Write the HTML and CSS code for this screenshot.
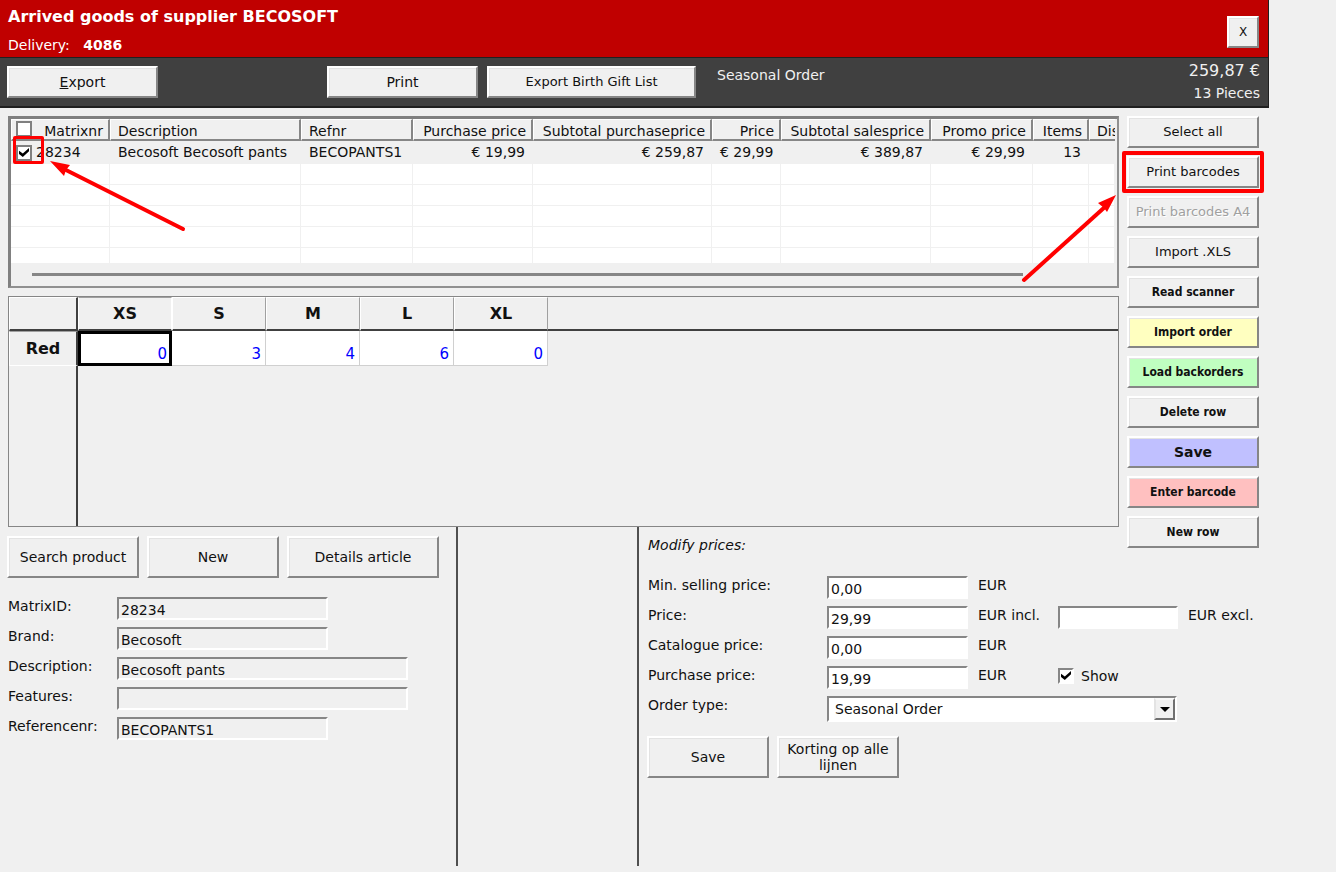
FILE: index.html
```
<!DOCTYPE html>
<html lang="en">
<head>
    <meta charset="utf-8">
    <title>Arrived goods of supplier BECOSOFT</title>
    <meta name="viewport" content="width=device-width, initial-scale=1">
    <link rel="stylesheet" href="styles.css">
</head>
<body>

<div id="window">
    <header class="titlebar">
        <div>
            <h1>Arrived goods of supplier BECOSOFT</h1>
            <p class="delivery">Delivery: <b>4086</b></p>
        </div>
        <button type="button" class="button close">X</button>
    </header>

    <div class="toolbar">
        <button type="button" class="button export"><u>E</u>xport</button>
        <button type="button" class="button">Print</button>
        <button type="button" class="button small gift">Export Birth Gift List</button>
        <span class="order">Seasonal Order</span>
        <div class="totals">
            <div class="amount">259,87 €</div>
            <div>13 Pieces</div>
        </div>
    </div>

    <main class="content">
        <div class="lists">
            <div class="goods">
                <table>
                    <colgroup>
                        <col class="w-nr"><col class="w-desc"><col class="w-ref"><col class="w-purch"><col class="w-subp">
                        <col class="w-price"><col class="w-subs"><col class="w-promo"><col class="w-items"><col>
                    </colgroup>
                    <thead>
                        <tr>
                            <th class="num"><input type="checkbox" class="check flat" aria-label="All rows">Matrixnr</th>
                            <th>Description</th>
                            <th>Refnr</th>
                            <th class="num">Purchase price</th>
                            <th class="num">Subtotal purchaseprice</th>
                            <th class="num">Price</th>
                            <th class="num">Subtotal salesprice</th>
                            <th class="num">Promo price</th>
                            <th class="num">Items</th>
                            <th>Dis</th>
                        </tr>
                    </thead>
                    <tbody>
                        <tr class="selected">
                            <td class="first"><input type="checkbox" class="check flat" aria-label="Row 28234" checked>28234</td>
                            <td>Becosoft Becosoft pants</td>
                            <td>BECOPANTS1</td>
                            <td class="num">€ 19,99</td>
                            <td class="num">€ 259,87</td>
                            <td class="num">€ 29,99</td>
                            <td class="num">€ 389,87</td>
                            <td class="num">€ 29,99</td>
                            <td class="num">13</td>
                            <td></td>
                        </tr>
                        <tr><td></td><td></td><td></td><td></td><td></td><td></td><td></td><td></td><td></td><td></td></tr>
                        <tr><td></td><td></td><td></td><td></td><td></td><td></td><td></td><td></td><td></td><td></td></tr>
                        <tr><td></td><td></td><td></td><td></td><td></td><td></td><td></td><td></td><td></td><td></td></tr>
                        <tr><td></td><td></td><td></td><td></td><td></td><td></td><td></td><td></td><td></td><td></td></tr>
                        <tr class="last"><td></td><td></td><td></td><td></td><td></td><td></td><td></td><td></td><td></td><td></td></tr>
                    </tbody>
                </table>
                <div class="scroll"><div class="thumb"></div></div>
            </div>

            <div class="sizes">
                <table>
                    <thead>
                        <tr>
                            <th class="corner"></th>
                            <th class="pressed">XS</th>
                            <th>S</th>
                            <th>M</th>
                            <th>L</th>
                            <th>XL</th>
                            <th class="rest"></th>
                        </tr>
                    </thead>
                    <tbody>
                        <tr>
                            <th class="corner pressed">Red</th>
                            <td class="current">0</td>
                            <td>3</td>
                            <td>4</td>
                            <td>6</td>
                            <td>0</td>
                            <td class="rest"></td>
                        </tr>
                        <tr class="blank">
                            <td class="corner"></td>
                            <td colspan="6" class="rest"></td>
                        </tr>
                    </tbody>
                </table>
            </div>
        </div>

        <nav class="side">
            <button type="button" class="button small">Select all</button>
            <div class="marked"><button type="button" class="button small">Print barcodes</button></div>
            <button type="button" class="button small" disabled>Print barcodes A4</button>
            <button type="button" class="button small">Import .XLS</button>
            <button type="button" class="button strong">Read scanner</button>
            <button type="button" class="button strong yellow">Import order</button>
            <button type="button" class="button strong green">Load backorders</button>
            <button type="button" class="button strong">Delete row</button>
            <button type="button" class="button save">Save</button>
            <button type="button" class="button strong pink">Enter barcode</button>
            <button type="button" class="button strong">New row</button>
        </nav>

        <section class="bottom">
            <form class="product">
                <div class="buttons">
                    <button type="button" class="button">Search product</button>
                    <button type="button" class="button">New</button>
                    <button type="button" class="button wide">Details article</button>
                </div>
                <div class="row">
                    <label for="matrixid">MatrixID:</label>
                    <input type="text" id="matrixid" class="text" value="28234" readonly>
                </div>
                <div class="row">
                    <label for="brand">Brand:</label>
                    <input type="text" id="brand" class="text" value="Becosoft" readonly>
                </div>
                <div class="row">
                    <label for="description">Description:</label>
                    <input type="text" id="description" class="text long" value="Becosoft pants" readonly>
                </div>
                <div class="row">
                    <label for="features">Features:</label>
                    <input type="text" id="features" class="text long" value="" readonly>
                </div>
                <div class="row">
                    <label for="refnr">Referencenr:</label>
                    <input type="text" id="refnr" class="text" value="BECOPANTS1" readonly>
                </div>
            </form>

            <div class="spacer"></div>

            <form class="prices">
                <p class="legend">Modify prices:</p>
                <div class="row">
                    <label for="minprice">Min. selling price:</label>
                    <input type="text" id="minprice" class="text" value="0,00">
                    <span class="unit">EUR</span>
                </div>
                <div class="row">
                    <label for="price">Price:</label>
                    <input type="text" id="price" class="text" value="29,99">
                    <span class="unit">EUR incl.</span>
                    <input type="text" id="excl" class="text excl" value="">
                    <label for="excl" class="after">EUR excl.</label>
                </div>
                <div class="row">
                    <label for="catalogue">Catalogue price:</label>
                    <input type="text" id="catalogue" class="text" value="0,00">
                    <span class="unit">EUR</span>
                </div>
                <div class="row">
                    <label for="purchase">Purchase price:</label>
                    <input type="text" id="purchase" class="text" value="19,99">
                    <span class="unit">EUR</span>
                    <label class="show"><input type="checkbox" class="check sunken" checked>Show</label>
                </div>
                <div class="row">
                    <label for="ordertype">Order type:</label>
                    <div class="combo">
                        <select id="ordertype">
                            <option>Seasonal Order</option>
                        </select>
                        <span class="drop"></span>
                    </div>
                </div>
                <div class="buttons">
                    <button type="button" class="button">Save</button>
                    <button type="button" class="button">Korting op alle lijnen</button>
                </div>
            </form>
        </section>

        <!-- red markers -->
        <div class="box-left"></div>
        <svg class="arrow-left" width="140" height="76" viewBox="0 0 140 76">
            <path d="M16 10L135 70" stroke="#f00" stroke-width="4" stroke-linecap="round"/>
            <path d="M2 2L22 6L18 11L16 17Z" fill="#f00"/>
        </svg>
        <svg class="arrow-right" width="100" height="92" viewBox="0 0 100 92">
            <path d="M4 86L86 12" stroke="#f00" stroke-width="4" stroke-linecap="round"/>
            <path d="M96 1L87 18L84 14L78 9Z" fill="#f00"/>
        </svg>
    </main>
</div>

</body>
</html>
```
FILE: styles.css
```
* {
    box-sizing: border-box;
    margin: 0;
    padding: 0;
}

body {
    background: #f0f0f0;
    font-family: "DejaVu Sans", Verdana, sans-serif;
    font-size: 14px;
    line-height: 18px;
    color: #111;
}

input, select, button {
    font: inherit;
    color: inherit;
}

#window {
    margin-right: 67px;
}

/* header */
.titlebar {
    display: flex;
    justify-content: space-between;
    align-items: flex-start;
    height: 58px;
    padding: 8px 9px 0 8px;
    background: #c00000;
    border-right: 1px solid #202020;
    border-bottom: 1px solid #202020;
    color: #fff;
}

.titlebar h1 {
    font-size: 16px;
    line-height: 18px;
}

.delivery {
    margin-top: 10px;
}

.delivery b {
    margin-left: 9px;
}

.toolbar {
    display: flex;
    align-items: flex-start;
    height: 50px;
    padding: 8px 8px 0 7px;
    background: #404040;
    border-right: 1px solid #202020;
    border-bottom: 2px solid #202020;
    color: #f0f0f0;
}

.toolbar .button {
    width: 151px;
    margin-right: 9px;
}

.toolbar .export {
    margin-right: 169px;
}

.toolbar .gift {
    width: 209px;
    margin-right: 21px;
}

.totals {
    margin-left: auto;
    margin-top: -6px;
    text-align: right;
    line-height: 22px;
}

.amount {
    font-size: 16px;
}

/* buttons */
.button {
    height: 32px;
    background: #f0f0f0;
    border: 2px solid;
    border-color: #fff #868686 #868686 #fff;
    box-shadow: inset 1px 1px #e3e3e3;
    line-height: 16px;
    color: #111;
}

.close {
    width: 32px;
    margin-top: 8px;
    font-size: 12px;
}

.small {
    font-size: 13px;
}

.strong {
    font-size: 12px;
    font-weight: bold;
    font-family: "DejaVu Sans Condensed", "DejaVu Sans", sans-serif;
}

.save {
    font-weight: bold;
    background: #c0c0ff;
}

.yellow {
    background: #ffffc0;
}

.green {
    background: #c0ffc0;
}

.pink {
    background: #ffc0c0;
}

.button:disabled {
    color: #a0a0a0;
    text-shadow: 1px 1px #fff;
}

/* page grid */
.content {
    position: relative;
    display: grid;
    grid-template-columns: minmax(0, 1fr) 132px;
    column-gap: 8px;
    padding: 8px 10px 0 8px;
}

.side {
    display: flex;
    flex-direction: column;
    gap: 8px;
    margin-bottom: -24px;
}

.side .button {
    width: 100%;
}

.marked {
    position: relative;
    height: 32px;
}

.marked::after {
    content: "";
    position: absolute;
    inset: -5px;
    border: 4px solid #f00;
    border-radius: 2px;
}

/* goods list */
.goods {
    height: 172px;
    border: 1px solid #808080;
    border-width: 3px 2px 2px 3px;
    border-color: #808080 #909090 #909090 #808080;
    padding-right: 2px;
    overflow: hidden;
}

.goods table {
    width: 100%;
    table-layout: fixed;
    border-collapse: separate;
    border-spacing: 0;
    background: #fff;
}

.w-nr {
    width: 99px;
}

.w-desc {
    width: 191px;
}

.w-ref {
    width: 112px;
}

.w-purch {
    width: 120px;
}

.w-subp {
    width: 179px;
}

.w-price {
    width: 69px;
}

.w-subs {
    width: 150px;
}

.w-promo {
    width: 102px;
}

.w-items {
    width: 56px;
}

.goods th {
    height: 22px;
    padding: 3px 5px 0 7px;
    background: #f0f0f0;
    border-top: 1px solid #fff;
    border-left: 1px solid #fff;
    border-right: 2px solid #868686;
    border-bottom: 2px solid #868686;
    font-weight: normal;
    line-height: 16px;
    text-align: left;
    white-space: nowrap;
    overflow: hidden;
}

.goods th:last-child {
    border-right: 0;
    padding-right: 0;
}

.goods td {
    height: 21px;
    padding: 0 7px 0 8px;
    border-right: 1px solid #f0f0f0;
    border-bottom: 1px solid #f0f0f0;
    white-space: nowrap;
}

.goods .selected td {
    height: 23px;
    background: #f0f0f0;
}

.goods .last td {
    height: 16px;
}

.goods .num {
    text-align: right;
}

.goods td.first {
    padding-left: 5px;
}

.goods th .check {
    float: left;
    margin: -2px 0 0 -3px;
}

.goods td .check {
    margin-right: 4px;
}

.scroll {
    height: 24px;
    padding: 9px 92px 0 21px;
}

.thumb {
    height: 3px;
    background: #868686;
}

/* tick boxes */
.check {
    appearance: none;
    width: 16px;
    height: 16px;
    background: #fff;
    border: 2px solid #808080;
    vertical-align: middle;
}

.check:checked::after {
    content: "";
    display: block;
    width: 10px;
    height: 9px;
    margin: 1px;
    background: #000;
    clip-path: polygon(0 30%, 38% 62%, 100% 0, 100% 35%, 38% 100%, 0 68%);
}

.sunken {
    border-color: #868686 #fff #fff #868686;
}

/* size matrix */
.sizes {
    height: 231px;
    margin-top: 8px;
    border: 1px solid #868686;
}

.sizes table {
    width: 100%;
    height: 100%;
    table-layout: fixed;
    border-collapse: separate;
    border-spacing: 0;
}

.sizes th, .sizes td {
    width: 94px;
}

.sizes th {
    height: 34px;
    border-left: 1px solid #fff;
    border-top: 1px solid #fff;
    border-right: 1px solid #a0a0a0;
    border-bottom: 2px solid #404040;
    font-size: 16px;
}

.sizes td {
    height: 35px;
    padding: 12px 4px 0 0;
    background: #fff;
    border-right: 1px solid #d0d0d0;
    border-bottom: 1px solid #d0d0d0;
    font-size: 15px;
    text-align: right;
    color: #00f;
}

.sizes .corner {
    width: 69px;
    border-right: 2px solid #404040;
}

.sizes thead .pressed {
    border-top-color: #a0a0a0;
    border-right-color: #fff;
}

.sizes tbody th {
    height: 35px;
    border-top-color: #a0a0a0;
    border-bottom: 1px solid #fff;
}

.sizes td.current {
    border: 3px solid #000;
    padding: 11px 2px 0 0;
    line-height: 17px;
}

.sizes .rest {
    width: auto;
    background: none;
    border-right: 0;
    border-left: 0;
    border-top: 0;
}

.sizes tbody .rest {
    border-bottom: 0;
}

.sizes .blank td {
    height: auto;
    background: none;
    border-bottom: 0;
}

/* forms */
.bottom {
    grid-column: 1 / 3;
    display: grid;
    grid-template-columns: 448px 183px minmax(0, 1fr);
    min-height: 339px;
}

.spacer {
    border-left: 2px solid #505050;
    border-right: 2px solid #505050;
}

.product {
    padding-top: 9px;
}

.product .buttons {
    display: flex;
    gap: 8px;
    margin: 0 0 19px -1px;
}

.product .button {
    width: 132px;
    height: 42px;
}

.product .wide {
    width: 152px;
}

.row {
    display: flex;
    align-items: flex-start;
    height: 30px;
}

.row label:first-child {
    width: 109px;
}

.text {
    width: 211px;
    height: 23px;
    padding: 2px 0 0 2px;
    background: #fff;
    border: 2px solid;
    border-color: #868686 #fff #fff #868686;
}

.text:read-only {
    background: #f0f0f0;
}

.long {
    width: 291px;
}

.prices {
    padding: 9px 0 0 9px;
}

.legend {
    margin-bottom: 22px;
    font-style: italic;
}

.prices .row label:first-child {
    width: 179px;
}

.prices .text {
    width: 141px;
}

.unit {
    width: 80px;
    margin-left: 10px;
}

.prices .excl {
    width: 120px;
}

.after {
    margin-left: 10px;
    white-space: nowrap;
}

.show {
    display: flex;
    align-items: center;
    gap: 7px;
    line-height: 20px;
}

.combo {
    position: relative;
    width: 350px;
}

.combo select {
    display: block;
    appearance: none;
    width: 100%;
    height: 26px;
    padding: 0 0 0 6px;
    background: #fff;
    border: 2px solid;
    border-color: #868686 #fff #fff #868686;
    border-radius: 0;
}

.drop {
    position: absolute;
    top: 2px;
    right: 2px;
    width: 21px;
    height: 22px;
    background: #f0f0f0;
    border: 2px solid;
    border-color: #f8f8f8 #707070 #707070 #e3e3e3;
    pointer-events: none;
}

.drop::after {
    content: "";
    position: absolute;
    top: 7px;
    left: 4px;
    border: 5px solid transparent;
    border-top-color: #000;
    border-bottom: 0;
}

.prices .buttons {
    display: flex;
    gap: 8px;
    margin: 10px 0 0 -1px;
}

.prices .button {
    width: 122px;
    height: 42px;
}

/* markers */
.box-left {
    position: absolute;
    left: 13px;
    top: 28px;
    width: 31px;
    height: 28px;
    border: 3px solid #f00;
    border-radius: 2px;
}

.arrow-left {
    position: absolute;
    left: 48px;
    top: 51px;
}

.arrow-right {
    position: absolute;
    right: 149px;
    top: 86px;
}
```
